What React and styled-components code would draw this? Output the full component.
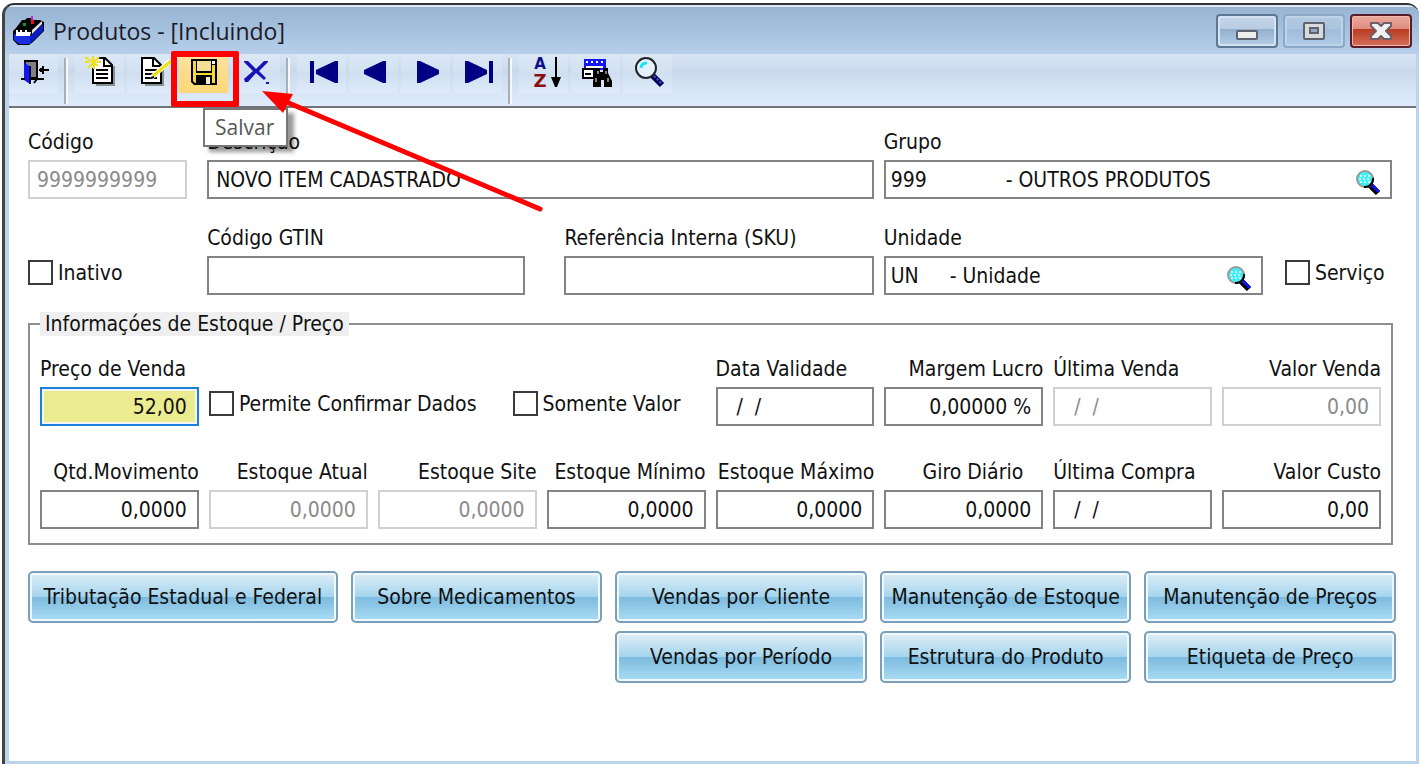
import React from "react";
import styled, { createGlobalStyle, css } from "styled-components";

const GlobalStyle = createGlobalStyle`
  * {
    box-sizing: border-box;
  }
  body {
    margin: 0;
    background: #ffffff;
    color: #111111;
    font-family: "DejaVu Sans Condensed", Tahoma, sans-serif;
    font-size: 21px;
    line-height: 26px;
  }
  button, input {
    font: inherit;
    color: inherit;
  }
`;

const Window = styled.div`
  display: flex;
  flex-direction: column;
  min-height: calc(100vh - 5px);
  margin: 3px 2px 2px;
  border-top: 2px solid #2f3338;
  border-left: 3px solid #444444;
  border-radius: 12px 12px 0 0;
  background: #bcd3ec;
  overflow: hidden;
`;

const TitleBar = styled.header`
  display: flex;
  align-items: center;
  height: 49px;
  padding: 0 7px 0 8px;
  border-top: 2px solid #dfe9f3;
  background: linear-gradient(#98b4d2, #a5c0dd 45%, #b7cfe9);
`;

const Title = styled.h1`
  flex: 1;
  margin: 0 0 0 9px;
  font-family: "Open Sans", "Segoe UI", sans-serif;
  font-size: 23px;
  font-weight: 400;
  color: #1b1b2a;
`;

const Caption = styled.div`
  display: flex;
  gap: 5px;
`;

const captionColors = {
  normal: css`
    border-color: #5b7896;
    background: linear-gradient(#c3d5ea, #b7cbe2 45%, #94b0cc 45%, #b4cee9);
    box-shadow: inset 0 0 0 2px #d5e3f2;
  `,
  soft: css`
    border-color: #8ba8c8;
    background: linear-gradient(#b3c9e2, #abc4df 45%, #a0bcda 45%, #b1cbe8);
    box-shadow: inset 0 0 0 2px #bfd3e9;
  `,
  close: css`
    border-color: #5a1d28;
    background: linear-gradient(#eaa99d, #dd8b7c 45%, #b93c22 45%, #d4715a);
    box-shadow: inset 0 0 0 1px #efb9ae;
  `,
};

const CaptionButton = styled.button`
  display: flex;
  align-items: center;
  justify-content: center;
  width: 62px;
  height: 34px;
  padding: 0;
  border: 2px solid;
  border-radius: 4px;
  ${(props) => captionColors[props.$kind]}
`;

const Client = styled.main`
  flex: 1;
  display: flex;
  flex-direction: column;
  margin: 0 3px 3px 4px;
  background: #ffffff;
`;

const Toolbar = styled.div`
  display: flex;
  align-items: flex-start;
  gap: 3px;
  height: 54px;
  border-bottom: 2px solid #70757b;
  background: linear-gradient(#d8e4f3, #cfdeef 25%, #c8d9eb 28%, #e0ecfb);
`;

const ToolButton = styled.button`
  position: relative;
  display: flex;
  align-items: center;
  justify-content: center;
  width: 49px;
  height: 39px;
  padding: 0 0 4px;
  border: 0;
  background: ${(props) =>
    props.$active
      ? "linear-gradient(#fbe3a0, #fbdc8a 50%, #fdd878)"
      : "linear-gradient(#dbe7f5, #d3e1f1 45%, #cfdef0 50%, #dfebfa)"};
  svg {
    overflow: visible;
  }
`;

const Separator = styled.span`
  width: 4px;
  height: 46px;
  margin: 4px 4px 0 3px;
  background: #a9afb6;
  border-right: 2px solid #f4f8fc;
`;

const Highlight = styled.span`
  position: absolute;
  z-index: 2;
  inset: -3px -11px -14px -8px;
  border: 6px solid #ff0000;
  border-radius: 2px;
  pointer-events: none;
`;

const Tooltip = styled.span`
  position: absolute;
  z-index: 3;
  top: 54px;
  left: 24px;
  padding: 4px 12px 5px 10px;
  border: 2px solid #767676;
  background: #ffffff;
  box-shadow: 6px 5px 4px rgba(0, 0, 0, 0.4);
  color: #575757;
  font-family: "Open Sans", "Segoe UI", sans-serif;
  font-size: 21px;
`;

const ArrowSvg = styled.svg`
  position: absolute;
  z-index: 4;
  top: 35px;
  left: 81px;
  pointer-events: none;
`;

const Form = styled.form`
  padding: 21px 20px 20px 19px;
`;

const HeaderGrid = styled.div`
  display: grid;
  grid-template-columns: 179fr 357fr 319fr 401fr 107fr;
  row-gap: 26px;
  padding-right: 4px;
`;

const FieldBox = styled.div`
  display: flex;
  flex-direction: column;
  gap: 5px;
  min-width: 0;
  grid-column: span ${(props) => props.$span || 1};
  padding-right: ${(props) => props.$end || 0}px;
`;

const FieldLabel = styled.label`
  align-self: ${(props) => (props.$right ? "flex-end" : "flex-start")};
  padding-right: ${(props) => props.$inset || 0}px;
  white-space: nowrap;
`;

const TextInput = styled.input`
  width: 100%;
  min-width: 0;
  height: 39px;
  padding: 0 10px 0 7px;
  border: 2px solid #838383;
  border-radius: 0;
  outline: 0;
  background: #ffffff;
  text-align: ${(props) => (props.$right ? "right" : "left")};
  &:disabled {
    border-color: #d0d0d0;
    color: #8b8b8b;
  }
  ${(props) =>
    props.$current &&
    css`
      border-color: #1a80d9;
      background: #ebeb90;
      box-shadow: inset 0 0 0 2px #f4f4f4;
    `}
`;

const Lookup = styled.div`
  display: flex;
  align-items: center;
  height: 39px;
  padding: 0 9px 0 5px;
  border: 2px solid #838383;
`;

const LookupInput = styled.input`
  flex: ${(props) => (props.$width ? `0 0 ${props.$width}px` : "1 1 0")};
  width: 0;
  min-width: 0;
  padding: 0;
  border: 0;
  outline: 0;
  background: transparent;
`;

const LookupButton = styled.button`
  display: flex;
  padding: 4px 0 0;
  border: 0;
  background: transparent;
`;

const CheckLabel = styled.label`
  display: flex;
  align-items: center;
  align-self: end;
  gap: 5px;
  height: 39px;
  padding-bottom: 6px;
  white-space: nowrap;
`;

const CheckBox = styled.input`
  appearance: none;
  flex: none;
  width: 25px;
  height: 25px;
  margin: 0;
  border: 2px solid #3a3a3a;
  background: #ffffff;
`;

const Group = styled.fieldset`
  min-width: 0;
  margin: 17px 3px 0 0;
  padding: 20px 10px 14px;
  border: 2px solid #8e8e8e;
`;

const Legend = styled.legend`
  padding: 0 5px;
  background: #efefef;
  line-height: 24px;
`;

const StockGrid = styled.div`
  display: grid;
  grid-template-columns: repeat(8, minmax(0, 1fr));
  column-gap: 10px;
  row-gap: 33px;
`;

const CheckRow = styled.div`
  grid-column: span 3;
  display: flex;
  align-items: end;
  gap: 36px;
`;

const Actions = styled.div`
  display: grid;
  grid-template-columns: 309fr 251fr 251fr 251fr 251fr;
  gap: 8px 13px;
  margin-top: 26px;
`;

const ActionButton = styled.button`
  height: 52px;
  padding: 0;
  grid-column-start: ${(props) => props.$column || "auto"};
  border: 2px solid #7b9fbb;
  border-radius: 5px;
  background: linear-gradient(#dfeef6, #a5d5ee 49%, #7dbbdf 50%, #aadcf3);
  box-shadow: inset 0 0 0 2px #eef8fd;
  white-space: nowrap;
`;

const AppIcon = () => (
  <svg width="31" height="30" viewBox="0 0 31 30" aria-hidden="true">
    <path d="M0 15 3 12 9 4h3l2-2h4l3 2h6l4 2v9L20 26l-4 3H5l-5-5z" fill="#000" />
    <path d="M1 18h16v10H6L1 24z" fill="#1a2fe0" />
    <path d="M17 20 30 8v7L19 26l-2 2z" fill="#0a1cc4" />
    <path d="M3 14h2v2h2v-2h2v2h3v-2h2v2h4l-1 4H3z" fill="#fff" />
    <path d="M19 14 29 5v3L19 18z" fill="#e4e4e4" />
    <path d="M10 7h3v3h-3z" fill="#0a9a2c" />
    <path d="M18 4h3v4h-3z" fill="#e01414" />
    <path d="M19 0v4" stroke="#d020d0" strokeWidth="2" />
  </svg>
);

const MinimizeIcon = () => (
  <svg width="22" height="22" viewBox="0 0 22 22" aria-hidden="true">
    <rect x="1" y="11" width="20" height="8" rx="1" fill="#eee" stroke="#5d6470" strokeWidth="2" />
  </svg>
);

const MaximizeIcon = () => (
  <svg width="22" height="18" viewBox="0 0 22 18" aria-hidden="true">
    <rect x="1" y="1" width="20" height="16" rx="1" fill="#d8dade" stroke="#5d6470" strokeWidth="2" />
    <rect x="7" y="6" width="8" height="5" fill="#92aac8" stroke="#5d6470" strokeWidth="2" />
  </svg>
);

const CloseIcon = () => (
  <svg width="22" height="18" viewBox="0 0 22 18" aria-hidden="true">
    <path
      d="M1 1h7l3 3 3-3h7v3l-5 5 5 5v3h-7l-3-3-3 3H1v-3l5-5-5-5z"
      fill="#f0f0f0"
      stroke="#6a5f6a"
      strokeWidth="2"
      strokeLinejoin="round"
    />
  </svg>
);

const ToolSvg = ({ children }) => (
  <svg width="30" height="30" viewBox="0 0 30 30" aria-hidden="true">
    {children}
  </svg>
);

const ExitIcon = () => (
  <ToolSvg>
    <path d="M6 4h12v17H6z" fill="#808080" stroke="#000" strokeWidth="2" />
    <path d="M5 5l6 5v17l-6-4z" fill="#1414f0" />
    <path d="M11 9v18" stroke="#000050" strokeWidth="2" />
    <path d="M2 22h4M12 22h13M18 22l-3 4M20 13h10M24 9v8M22 11v4" stroke="#000" strokeWidth="2" />
  </ToolSvg>
);

const Page = () => (
  <>
    <path d="M11 28h18V9" fill="none" stroke="#8a8f96" strokeWidth="2" />
    <path d="M8 1h12l7 7v18H8z" fill="#fff" stroke="#000" strokeWidth="2" />
    <path d="M19 1v8h8" fill="none" stroke="#000" strokeWidth="2" />
    <path d="M11 13h12M11 17h12M11 21h12" stroke="#000" strokeWidth="2" />
  </>
);

const NewIcon = () => (
  <ToolSvg>
    <Page />
    <path d="M4-1h9l-1 9-6 4z" fill="#dce7f4" />
    <path d="M0 0l13 9M8-1v5M14 0 3 11M0 5h4M12 5h4M9 6v6" stroke="#f0e010" strokeWidth="2" />
  </ToolSvg>
);

const EditIcon = () => (
  <ToolSvg>
    <g transform="translate(-3 0)">
      <Page />
    </g>
    <path d="M14 21 33 4" stroke="#ffffff" strokeWidth="5" />
    <path d="M16 19 34 4" stroke="#f0e010" strokeWidth="3" />
    <path d="M14 21l3-1" stroke="#000" strokeWidth="2" />
  </ToolSvg>
);

const SaveIcon = () => (
  <ToolSvg>
    <path d="M2 2h26v26H5l-3-3z" fill="#000" />
    <path d="M4 4h3v12h16V8h3v18h-3v-8H7v8H6l-2-2z" fill="#f4d93c" />
    <path d="M8 4h14v10H8z" fill="#f5df94" />
    <path d="M23 4h3v3h-3z" fill="#fff" />
    <path d="M17 20h4v7h-4z" fill="#f4ecd0" />
  </ToolSvg>
);

const DeleteIcon = () => (
  <ToolSvg>
    <path d="M3 4h4l8 8 8-8h4v1l-9 9 7 7-2 2-8-7-8 9H4l-1-3 9-8-9-9z" fill="#1414b4" />
    <path d="M25 25h3v2h-3z" fill="#1414b4" />
  </ToolSvg>
);

const FirstIcon = () => (
  <ToolSvg>
    <path d="M3 4h4v22H3zM31 4v22h-3L9 17v-4l19-9z" fill="#000084" />
  </ToolSvg>
);

const PreviousIcon = () => (
  <ToolSvg>
    <path d="M27 4v22h-3L5 17v-4l19-9z" fill="#000084" />
  </ToolSvg>
);

const NextIcon = () => (
  <ToolSvg>
    <path d="M6 4v22h3l19-9v-4L9 4z" fill="#000084" />
  </ToolSvg>
);

const LastIcon = () => (
  <ToolSvg>
    <path d="M2 4v22h3l19-9v-4L5 4zM26 4h4v22h-4z" fill="#000084" />
  </ToolSvg>
);

const SortIcon = () => (
  <ToolSvg>
    <g fontFamily="DejaVu Sans, sans-serif" fontWeight="700" textAnchor="middle">
      <text x="11" y="12" fontSize="15" fill="#10108c">
        A
      </text>
      <text x="11" y="30" fontSize="18" fill="#8c1010">
        Z
      </text>
    </g>
    <path d="M27 0v21" stroke="#000" strokeWidth="2" />
    <path d="M22 20h10l-4 10h-2z" fill="#000" />
  </ToolSvg>
);

const FindIcon = () => (
  <ToolSvg>
    <path d="M3 2h22v11H3z" fill="#1414ff" />
    <path d="M5 4h2v2H5zM10 4h2v2h-2zM15 4h2v2h-2zM20 4h2v2h-2zM5 9h17v2H5z" fill="#fff" />
    <path d="M2 12h11v9H2z" fill="#fff" stroke="#000" strokeWidth="2" />
    <path d="M4 17h6" stroke="#000" strokeWidth="2" />
    <path d="M14 11h5v4h3v-4h5v5l4 8v6h-8v-7h-3v7h-8v-6l2-8z" fill="#000" />
    <path d="M15 21v4M27 21v4M17 14v3M25 14v3" stroke="#fff" strokeWidth="1" />
  </ToolSvg>
);

const SearchIcon = () => (
  <ToolSvg>
    <path d="M19 18l10 10" stroke="#000060" strokeWidth="6" />
    <path d="M21 19l8 8" stroke="#4a5ad0" strokeWidth="2" strokeDasharray="2 2" />
    <circle cx="13" cy="11" r="10" fill="#e4f0fb" stroke="#222" strokeWidth="2" />
    <path d="M8 11c0-3 2-5 6-5" fill="none" stroke="#19e6f5" strokeWidth="3" />
  </ToolSvg>
);

const LensIcon = () => (
  <svg width="26" height="26" viewBox="0 0 26 26" aria-hidden="true">
    <path d="M14 15l9 9" stroke="#000" strokeWidth="6" />
    <path d="M15 14l9 9" stroke="#1010f0" strokeWidth="3" />
    <path d="M13 14l3 3" stroke="#19b8c8" strokeWidth="2" />
    <circle cx="10" cy="10" r="8" fill="#3cf0f6" stroke="#9a9a9a" strokeWidth="2" />
    <path d="M18 9a8 8 0 0 1-9 9" fill="none" stroke="#000" strokeWidth="2" />
    <path
      d="M5 7h10M4 10h12M5 13h10"
      stroke="#c4fbff"
      strokeWidth="2"
      strokeDasharray="2 2"
    />
  </svg>
);

const Arrow = () => (
  <ArrowSvg width="284" height="122" viewBox="0 0 284 122" aria-hidden="true">
    <path d="M24 12 280 120" stroke="#ff0000" strokeWidth="5" strokeLinecap="round" />
    <path d="M2 2 33 5 23 24z" fill="#ff0000" />
  </ArrowSvg>
);

function Field({ id, label, span, end, right, labelLeft, inset, current, value, disabled }) {
  return (
    <FieldBox $span={span} $end={end}>
      <FieldLabel htmlFor={id} $right={right && !labelLeft} $inset={inset}>
        {label}
      </FieldLabel>
      <TextInput
        id={id}
        type="text"
        $right={right}
        $current={current}
        defaultValue={value}
        disabled={disabled}
      />
    </FieldBox>
  );
}

function LookupField({ id, label, span, end, code, codeWidth, value }) {
  return (
    <FieldBox $span={span} $end={end}>
      <FieldLabel htmlFor={id}>{label}</FieldLabel>
      <Lookup>
        <LookupInput id={id} type="text" defaultValue={code} $width={codeWidth} />
        <LookupInput type="text" aria-label={`${label} nome`} defaultValue={value} readOnly />
        <LookupButton type="button" aria-label={`Pesquisar ${label}`}>
          <LensIcon />
        </LookupButton>
      </Lookup>
    </FieldBox>
  );
}

function Check({ children }) {
  return (
    <CheckLabel>
      <CheckBox type="checkbox" />
      {children}
    </CheckLabel>
  );
}

function MainToolbar() {
  return (
    <Toolbar role="toolbar">
      <ToolButton aria-label="Sair"><ExitIcon /></ToolButton>
      <Separator />
      <ToolButton aria-label="Incluir"><NewIcon /></ToolButton>
      <ToolButton aria-label="Alterar"><EditIcon /></ToolButton>
      <ToolButton $active aria-labelledby="tip-salvar">
        <SaveIcon />
        <Highlight />
        <Tooltip id="tip-salvar" role="tooltip">Salvar</Tooltip>
        <Arrow />
      </ToolButton>
      <ToolButton aria-label="Cancelar"><DeleteIcon /></ToolButton>
      <Separator />
      <ToolButton aria-label="Primeiro"><FirstIcon /></ToolButton>
      <ToolButton aria-label="Anterior"><PreviousIcon /></ToolButton>
      <ToolButton aria-label="Próximo"><NextIcon /></ToolButton>
      <ToolButton aria-label="Último"><LastIcon /></ToolButton>
      <Separator />
      <ToolButton aria-label="Ordenar"><SortIcon /></ToolButton>
      <ToolButton aria-label="Localizar"><FindIcon /></ToolButton>
      <ToolButton aria-label="Pesquisar"><SearchIcon /></ToolButton>
    </Toolbar>
  );
}

function App() {
  return (
    <>
      <GlobalStyle />
      <Window>
        <TitleBar>
          <AppIcon />
          <Title>Produtos - [Incluindo]</Title>
          <Caption>
            <CaptionButton $kind="normal" aria-label="Minimizar"><MinimizeIcon /></CaptionButton>
            <CaptionButton $kind="soft" aria-label="Maximizar"><MaximizeIcon /></CaptionButton>
            <CaptionButton $kind="close" aria-label="Fechar"><CloseIcon /></CaptionButton>
          </Caption>
        </TitleBar>
        <Client>
          <MainToolbar />
          <Form>
            <HeaderGrid>
              <Field id="codigo" label="Código" end={20} value="9999999999" disabled />
              <Field id="descricao" label="Descrição" span={2} end={10} value="NOVO ITEM CADASTRADO" />
              <LookupField
                id="grupo"
                label="Grupo"
                span={2}
                code="999"
                codeWidth={115}
                value="- OUTROS PRODUTOS"
              />
              <Check>Inativo</Check>
              <Field id="gtin" label="Código GTIN" end={39} />
              <Field id="sku" label="Referência Interna (SKU)" end={10} />
              <LookupField id="unidade" label="Unidade" end={22} code="UN" codeWidth={59} value="- Unidade" />
              <Check>Serviço</Check>
            </HeaderGrid>

            <Group>
              <Legend>Informaçóes de Estoque / Preço</Legend>
              <StockGrid>
                <Field id="preco" label="Preço de Venda" value="52,00" right labelLeft current />
                <CheckRow>
                  <Check>Permite Confirmar Dados</Check>
                  <Check>Somente Valor</Check>
                </CheckRow>
                <Field id="validade" label="Data Validade" value="  /  /" />
                <Field id="margem" label="Margem Lucro" value="0,00000 %" right />
                <Field id="ultima-venda" label="Última Venda" value="  /  /" disabled />
                <Field id="valor-venda" label="Valor Venda" value="0,00" right disabled />

                <Field id="movimento" label="Qtd.Movimento" value="0,0000" right />
                <Field id="atual" label="Estoque Atual" value="0,0000" right disabled />
                <Field id="site" label="Estoque Site" value="0,0000" right disabled />
                <Field id="minimo" label="Estoque Mínimo" value="0,0000" right />
                <Field id="maximo" label="Estoque Máximo" value="0,0000" right />
                <Field id="giro" label="Giro Diário" value="0,0000" right inset={20} />
                <Field id="ultima-compra" label="Última Compra" value="  /  /" />
                <Field id="custo" label="Valor Custo" value="0,00" right />
              </StockGrid>
            </Group>

            <Actions>
              <ActionButton type="button">Tributação Estadual e Federal</ActionButton>
              <ActionButton type="button">Sobre Medicamentos</ActionButton>
              <ActionButton type="button">Vendas por Cliente</ActionButton>
              <ActionButton type="button">Manutenção de Estoque</ActionButton>
              <ActionButton type="button">Manutenção de Preços</ActionButton>
              <ActionButton type="button" $column={3}>Vendas por Período</ActionButton>
              <ActionButton type="button">Estrutura do Produto</ActionButton>
              <ActionButton type="button">Etiqueta de Preço</ActionButton>
            </Actions>
          </Form>
        </Client>
      </Window>
    </>
  );
}

export default App;
